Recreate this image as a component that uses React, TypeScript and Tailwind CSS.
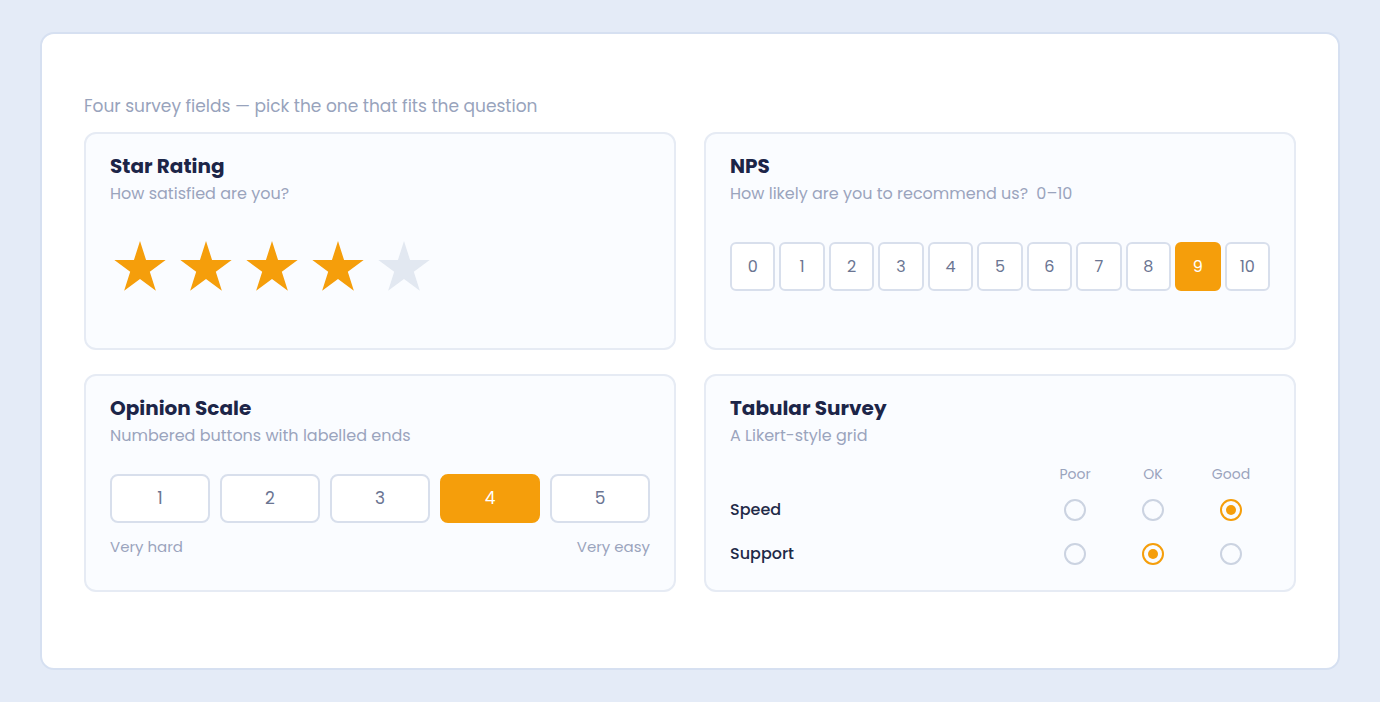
import React from 'react'

const font = { fontFamily: 'Poppins, Inter, "Noto Sans", sans-serif' }

function Star({ filled }: { filled: boolean }) {
  return (
    <svg width="52" height="50" viewBox="0 0 52 50" className={filled ? 'text-[#f59e0b]' : 'text-[#e2e8f1]'}>
      <polygon
        fill="currentColor"
        points="26,0 32.06,19 51.68,19 35.81,30.75 41.87,49.75 26,38.01 10.13,49.75 16.19,30.75 0.32,19 19.94,19"
      />
    </svg>
  )
}

function Card({ title, sub, children }: { title: string; sub: React.ReactNode; children: React.ReactNode }) {
  return (
    <div className="rounded-xl border-2 border-[#e6ebf4] bg-[#fafcff] px-[24px] pt-[18px]">
      <h3 className="text-[20px] leading-[28px] font-bold text-[#1c2548]">{title}</h3>
      <p className="mt-[2px] text-[16px] leading-[24px] text-[#9aa4bd]">{sub}</p>
      {children}
    </div>
  )
}

function Radio({ on }: { on: boolean }) {
  return (
    <div
      className={`flex h-[22px] w-[22px] items-center justify-center rounded-full border-2 ${
        on ? 'border-[#f59e0b]' : 'border-[#cbd3e1]'
      }`}
    >
      {on && <div className="h-[10px] w-[10px] rounded-full bg-[#f59e0b]" />}
    </div>
  )
}

const grid = [
  { label: 'Speed', pick: 2 },
  { label: 'Support', pick: 1 },
]

export default function App() {
  return (
    <div style={font} className="flex min-h-screen items-center bg-[#e4ebf7] px-10">
      <div className="w-full rounded-[14px] border-2 border-[#d6e0f1] bg-white px-[42px] pt-[60px] pb-[76px]">
        <p className="mb-[14px] text-[17px] leading-6 text-[#98a3bc]">
          Four survey fields — pick the one that fits the question
        </p>

        <div className="grid grid-cols-2 auto-rows-[218px] gap-x-[28px] gap-y-[24px]">
          <Card title="Star Rating" sub="How satisfied are you?">
            <div className="mt-[35px] flex gap-[14px] pl-1">
              {[1, 2, 3, 4, 5].map((n) => (
                <Star key={n} filled={n <= 4} />
              ))}
            </div>
          </Card>

          <Card
            title="NPS"
            sub={
              <>
                How likely are you to recommend us? <span className="ml-1">0–10</span>
              </>
            }
          >
            <div className="mt-[36px] flex gap-1">
              {Array.from({ length: 11 }, (_, i) => (
                <div
                  key={i}
                  className={`flex h-[49px] flex-1 items-center justify-center rounded-md border-2 text-[16px] ${
                    i === 9
                      ? 'border-[#f59e0b] bg-[#f59e0b] text-white'
                      : 'border-[#d8dfec] bg-white text-[#6b7592]'
                  }`}
                >
                  {i}
                </div>
              ))}
            </div>
          </Card>

          <Card title="Opinion Scale" sub="Numbered buttons with labelled ends">
            <div className="mt-[26px] flex gap-[10px]">
              {[1, 2, 3, 4, 5].map((n) => (
                <div
                  key={n}
                  className={`flex h-[49px] flex-1 items-center justify-center rounded-lg border-2 text-[17px] ${
                    n === 4
                      ? 'border-[#f59e0b] bg-[#f59e0b] text-white'
                      : 'border-[#d8dfec] bg-white text-[#6b7592]'
                  }`}
                >
                  {n}
                </div>
              ))}
            </div>
            <div className="mt-[14px] flex justify-between text-[15px] leading-5 text-[#9aa4bd]">
              <span>Very hard</span>
              <span>Very easy</span>
            </div>
          </Card>

          <Card title="Tabular Survey" sub="A Likert-style grid">
            <div className="mt-[16px] grid grid-cols-[1fr_78px_78px_78px]">
              <div className="h-5" />
              {['Poor', 'OK', 'Good'].map((h) => (
                <div key={h} className="h-5 text-center text-[14px] leading-5 text-[#9aa4bd]">
                  {h}
                </div>
              ))}
              {grid.map((row, r) => (
                <React.Fragment key={row.label}>
                  <div className={`flex h-[44px] items-center text-[16px] font-medium text-[#1f2a48] ${r === 0 ? 'mt-[4px]' : ''}`}>
                    {row.label}
                  </div>
                  {[0, 1, 2].map((c) => (
                    <div key={c} className={`flex h-[44px] items-center justify-center ${r === 0 ? 'mt-[4px]' : ''}`}>
                      <Radio on={row.pick === c} />
                    </div>
                  ))}
                </React.Fragment>
              ))}
            </div>
          </Card>
        </div>
      </div>
    </div>
  )
}
